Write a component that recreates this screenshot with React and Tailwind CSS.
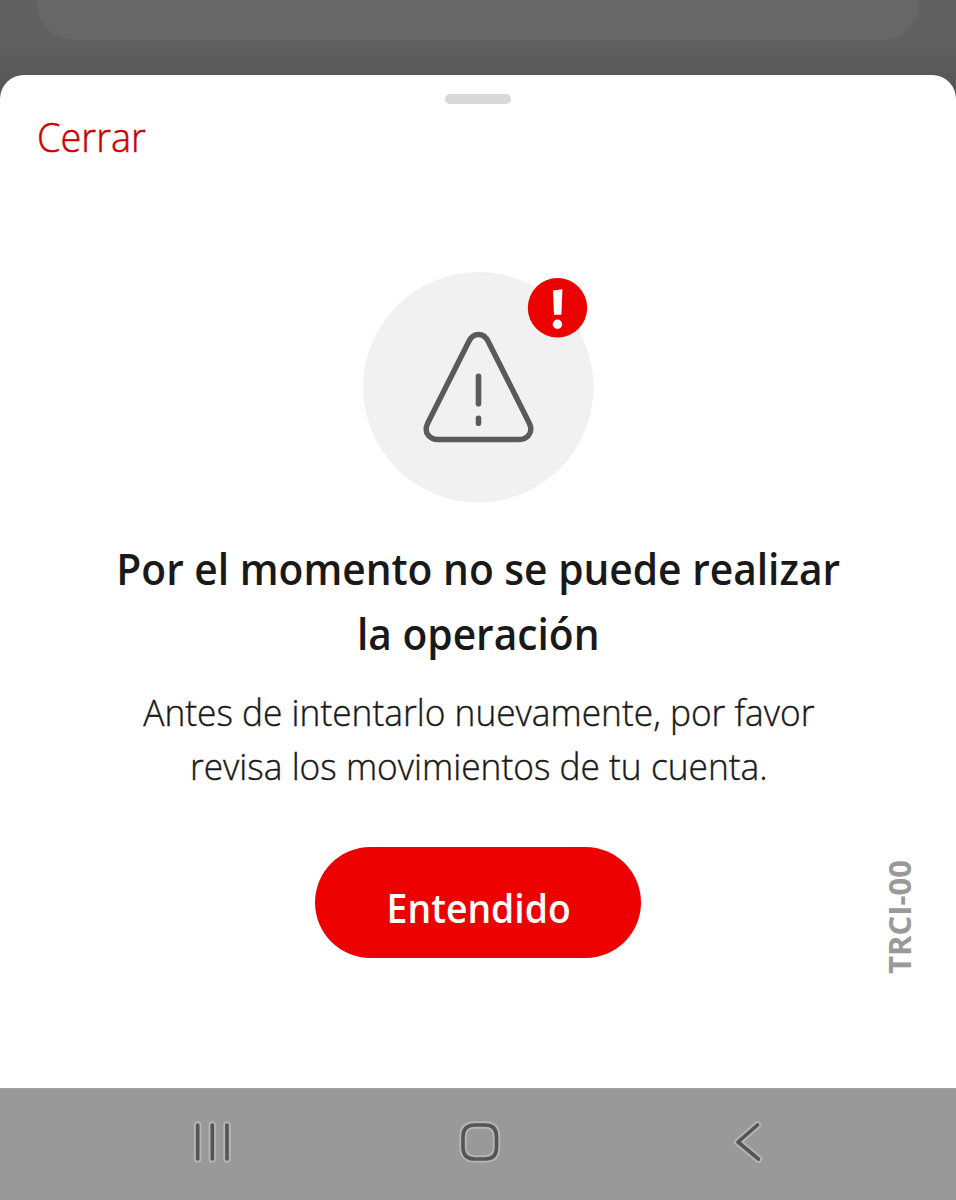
function WarningIllustration() {
  return (
    <svg className="block h-[232px] w-[230px] overflow-visible" viewBox="0 0 230 232" fill="none" aria-hidden="true">
      <circle cx="115.300" cy="116.200" r="115.200" fill="#f1f1f1" />
      <path
        d="M105.800 70.500 L64.800 152 Q61.200 159.500 65.500 164.500 Q69 168.500 74.500 168.500 H156.500 Q162 168.500 165.500 164.500 Q169.800 159.500 166.200 152 L125.200 70.500 Q121.800 63.500 115.500 63.500 Q109.200 63.500 105.800 70.500 Z"
        stroke="#5a5a5a"
        strokeWidth="5.4"
        strokeLinejoin="round"
      />
      <path d="M115.500 105.200 V132.800 M115.500 147.200 V152.200" stroke="#5a5a5a" strokeWidth="5.600" strokeLinecap="round" />
      <circle cx="194.500" cy="36.800" r="29.700" fill="#ec0000" />
      <path d="M190 19.500 L199.400 18.200 L198.400 43.800 H191 Z" fill="#fff" />
      <circle cx="194.500" cy="53.200" r="4.700" fill="#fff" />
    </svg>
  );
}

function NavIcon({ d }) {
  return (
    <svg className="block h-[48px] w-[48px]" viewBox="0 0 48 48" fill="none" strokeLinecap="round" strokeLinejoin="round" aria-hidden="true">
      <path d={d} stroke="#b4b4b4" strokeWidth="7.600" />
      <path d={d} stroke="#555" strokeWidth="3.600" />
    </svg>
  );
}

export default function App() {
  return (
    <div className="flex h-[1200px] w-[956px] flex-col overflow-hidden bg-linear-to-b from-[#616161] from-[3%] to-[#545454] to-[8%] font-['Open_Sans','Noto_Sans',sans-serif]">
      <div className="mx-[37px] h-[40px] shrink-0 rounded-b-[37px] bg-[#676767]" />
      <main className="mt-[35px] flex h-[1013px] shrink-0 flex-col items-center rounded-t-[24px] bg-white">
        <div className="mt-[19px] h-[10px] w-[66px] shrink-0 rounded-full bg-[#d8d8d8]" />
        <button className="ml-[37px] mt-[4px] h-[56px] origin-left scale-x-[0.925] self-start whitespace-nowrap text-[41px] font-light leading-[56px] text-[#cc0000] [-webkit-text-stroke:0.5px_#cc0000]">
          Cerrar
        </button>
        <div className="mt-[107px]">
          <WarningIllustration />
        </div>
        <h1 className="mt-[33px] scale-x-[0.925] text-center text-[44px] font-semibold leading-[65px] text-[#191919]">
          <span className="block whitespace-nowrap">Por el momento no se puede realizar</span>
          <span className="block whitespace-nowrap">la operación</span>
        </h1>
        <p className="ml-[2px] mt-[19px] scale-x-[0.954] text-center text-[37px] font-light leading-[54px] text-[#191919] [-webkit-text-stroke:0.4px_#191919]">
          <span className="block whitespace-nowrap">Antes de intentarlo nuevamente, por favor</span>
          <span className="block whitespace-nowrap">revisa los movimientos de tu cuenta.</span>
        </p>
        <div className="mt-[54px] grid w-full grid-cols-[1fr_326px_1fr]">
          <button className="col-start-2 h-[111px] rounded-full bg-[#ec0000] pl-[2px] pt-[10px] text-[40px] font-semibold leading-[56px] text-white">
            <span className="inline-block scale-x-[0.933]">Entendido</span>
          </button>
          <div className="flex h-[127px] items-end justify-end pr-[36px]">
            <span className="rotate-180 whitespace-nowrap text-[31px] font-bold leading-[42px] text-[#999] [writing-mode:vertical-rl]">
              TRCI-00
            </span>
          </div>
        </div>
      </main>
      <nav className="flex h-[112px] shrink-0 items-center border-t border-[#a0a0a0] bg-[#999] pb-[5px] pl-[188px]">
        <button aria-label="Recientes"><NavIcon d="M9.700 7V41 M24.300 7V41 M39 7V41" /></button>
        <button aria-label="Inicio" className="ml-[220px]"><NavIcon d="M19 7H29Q40.500 7 40.500 18.500V29.500Q40.500 41 29 41H19Q7 41 7 29.500V18.500Q7 7 19 7Z" /></button>
        <button aria-label="Atrás" className="ml-[220px]"><NavIcon d="M33.500 7L14 24L34.500 41" /></button>
      </nav>
    </div>
  );
}
